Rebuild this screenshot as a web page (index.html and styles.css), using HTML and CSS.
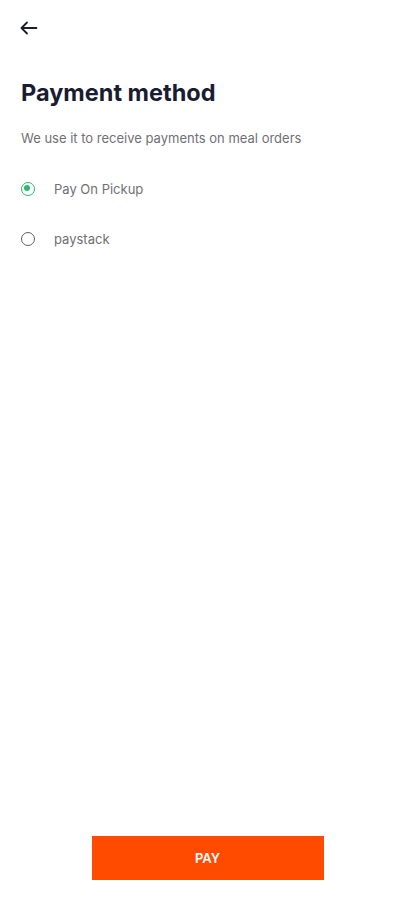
FILE: index.html
```html
<!DOCTYPE html>
<html>
  <head>
    <meta name="viewport" content="width=device-width,initial-scale=1.0">
    <title>Payment method</title>
    <link rel="stylesheet" href="styles.css">
  </head>
  <body>
    <div class="page">
      <div class="top-bar">
        <button class="back-btn" aria-label="Back">
          <svg width="18" height="14" viewBox="0 0 18 14" fill="none" stroke="#1b1e2b" stroke-width="1.8" stroke-linecap="round" stroke-linejoin="round">
            <path d="M16.5 7H2"/>
            <path d="M7 1.5L1.5 7L7 12.5"/>
          </svg>
        </button>
      </div>

      <div class="content">
        <h1 class="title">Payment method</h1>
        <p class="subtitle">We use it to receive payments on meal orders</p>

        <ul class="options">
          <li class="option">
            <span class="radio checked"></span>
            <span class="option-label">Pay On Pickup</span>
          </li>
          <li class="option">
            <span class="radio"></span>
            <span class="option-label">paystack</span>
          </li>
        </ul>
      </div>

      <div class="footer">
        <button class="pay-btn">PAY</button>
      </div>
    </div>
  </body>
</html>
```

FILE: styles.css
```css
body {
  margin: 0;
  font-family: Inter, "Noto Sans", sans-serif;
  background: #fff;
  color: #1b1e2b;
}
.page {
  display: flex;
  flex-direction: column;
  height: 100vh;
}
.top-bar {
  padding: 21px 0 0 20px;
  height: 36px;
}
.back-btn {
  background: none;
  border: none;
  padding: 0;
  width: 20px;
  height: 14px;
  display: flex;
  align-items: center;
}
.content {
  flex: 1;
  padding: 0 21px;
}
.title {
  margin: 21px 0 0;
  font-size: 23.5px;
  font-weight: 700;
  letter-spacing: 0;
  color: #1a1d30;
}
.subtitle {
  margin: 23px 0 0;
  font-size: 13px;
  color: #6f7075;
}
.options {
  list-style: none;
  margin: 18px 0 0;
  padding: 0;
}
.option {
  display: flex;
  align-items: center;
  gap: 19px;
  height: 50px;
}
.radio {
  width: 14px;
  height: 14px;
  border: 1.8px solid #5d5f63;
  border-radius: 50%;
  box-sizing: border-box;
  position: relative;
  flex-shrink: 0;
}
.radio.checked {
  border-color: #2cb76c;
}
.radio.checked::after {
  content: "";
  position: absolute;
  top: 2.2px;
  left: 2.2px;
  width: 6px;
  height: 6px;
  border-radius: 50%;
  background: #2cb76c;
}
.option-label {
  font-size: 13px;
  color: #6f7075;
}
.footer {
  display: flex;
  justify-content: center;
  padding-bottom: 20px;
}
.pay-btn {
  width: 232px;
  height: 44px;
  border: none;
  background: #ff4b00;
  color: #fff;
  font-family: Inter, "Noto Sans", sans-serif;
  font-size: 13px;
  font-weight: 600;
}
```
